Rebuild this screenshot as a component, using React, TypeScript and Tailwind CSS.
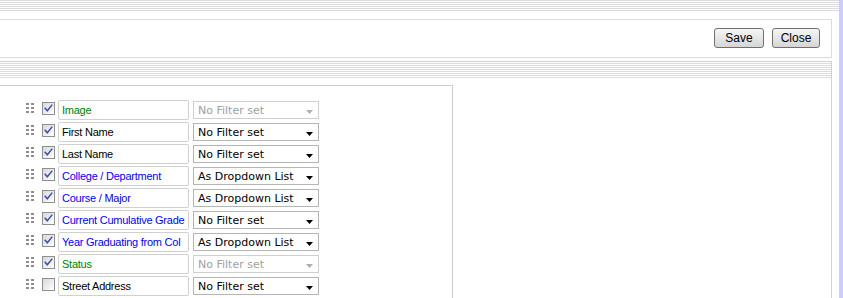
import React from "react";

type Row = { label: string; color: string; checked: boolean; filter: string; disabled: boolean };

const rows: Row[] = [
  { label: "Image", color: "text-[#008000]", checked: true, filter: "No Filter set", disabled: true },
  { label: "First Name", color: "text-[#000000]", checked: true, filter: "No Filter set", disabled: false },
  { label: "Last Name", color: "text-[#000000]", checked: true, filter: "No Filter set", disabled: false },
  { label: "College / Department", color: "text-[#0000ff]", checked: true, filter: "As Dropdown List", disabled: false },
  { label: "Course / Major", color: "text-[#0000ff]", checked: true, filter: "As Dropdown List", disabled: false },
  { label: "Current Cumulative Grade", color: "text-[#0000ff]", checked: true, filter: "No Filter set", disabled: false },
  { label: "Year Graduating from Col", color: "text-[#0000ff]", checked: true, filter: "As Dropdown List", disabled: false },
  { label: "Status", color: "text-[#008000]", checked: true, filter: "No Filter set", disabled: true },
  { label: "Street Address", color: "text-[#000000]", checked: false, filter: "No Filter set", disabled: false },
];

function Handle() {
  return (
    <div className="mt-[4px] grid grid-cols-[3px_3px] gap-x-[2px] gap-y-[2px] w-[8px]">
      {Array.from({ length: 6 }).map((_, i) => (
        <div key={i} className="w-[3px] h-[2px] bg-[#8c8c8c]" />
      ))}
    </div>
  );
}

function Checkbox({ checked }: { checked: boolean }) {
  return (
    <div className="mt-[3px] w-[13px] h-[13px] border border-[#8f8f8f] bg-linear-to-br from-[#d8d8d8] to-[#ffffff] flex items-center justify-center">
      {checked && (
        <svg width="11" height="11" viewBox="0 0 11 11">
          <path d="M2.2 5.3 L4.3 7.8 L8.8 2.2" fill="none" stroke="#3a4fae" strokeWidth="1.5" strokeLinecap="square" />
        </svg>
      )}
    </div>
  );
}

function Select({ text, disabled }: { text: string; disabled: boolean }) {
  return (
    <div
      className={`ml-[4px] mt-[2px] w-[126px] h-[18px] border flex items-center justify-between pl-[4px] pr-[5px] font-['DejaVu_Sans',Verdana,sans-serif] text-[11px] ${
        disabled ? "border-[#cfcfcf] text-[#a0a0a0]" : "border-[#b5b5b5] text-[#000000]"
      }`}
    >
      <span className="leading-none">{text}</span>
      <svg width="7" height="4" viewBox="0 0 7 4" className="mt-[3px]">
        <path d="M0 0 H7 L3.5 4 Z" fill={disabled ? "#b0b0b0" : "#000000"} />
      </svg>
    </div>
  );
}

export default function App() {
  return (
    <div className="w-[843px] h-[298px] overflow-hidden bg-white flex font-['Liberation_Sans',Arial,sans-serif]">
      <div className="w-[839px] flex flex-col">
        <div className="h-[11px] bg-[repeating-linear-gradient(to_bottom,#dcdcdc_0px,#dcdcdc_1px,#ffffff_1px,#ffffff_2px)]" />
        <div className="mt-[8px] w-[832px] h-[39px] border border-l-0 border-[#dcdcdc] flex justify-end items-start pt-[8px] pr-[11px] gap-[8px]">
          <button className="w-[50px] h-[20px] border border-[#707070] rounded-[3px] bg-linear-to-b from-[#f6f6f6] to-[#d6d6d6] text-[12px] text-black leading-none">
            Save
          </button>
          <button className="w-[48px] h-[20px] border border-[#707070] rounded-[3px] bg-linear-to-b from-[#f6f6f6] to-[#d6d6d6] text-[12px] text-black leading-none">
            Close
          </button>
        </div>
        <div className="mt-[3px] w-[832px] flex-1 border-t border-r border-[#ccccff] flex flex-col">
          <div className="h-[16px] bg-[repeating-linear-gradient(to_bottom,#ffffff_0px,#ffffff_1px,#dcdcdc_1px,#dcdcdc_2px)]" />
          <div className="mt-[7px] w-[453px] flex-1 border-t border-r border-[#cccccc] pt-[13px] pl-[26px] flex flex-col">
            {rows.map((r) => (
              <div key={r.label} className="h-[22px] flex items-start">
                <Handle />
                <div className="ml-[8px]">
                  <Checkbox checked={r.checked} />
                </div>
                <div
                  className={`ml-[3px] mt-[1px] w-[131px] h-[20px] border border-[#d0d0d0] rounded-[2px] pl-[3px] flex items-center text-[11px] tracking-[-0.25px] whitespace-nowrap overflow-hidden ${r.color}`}
                >
                  {r.label}
                </div>
                <Select text={r.filter} disabled={r.disabled} />
              </div>
            ))}
          </div>
        </div>
      </div>
      <div className="w-[4px] h-full bg-[#ccccff]" />
    </div>
  );
}
